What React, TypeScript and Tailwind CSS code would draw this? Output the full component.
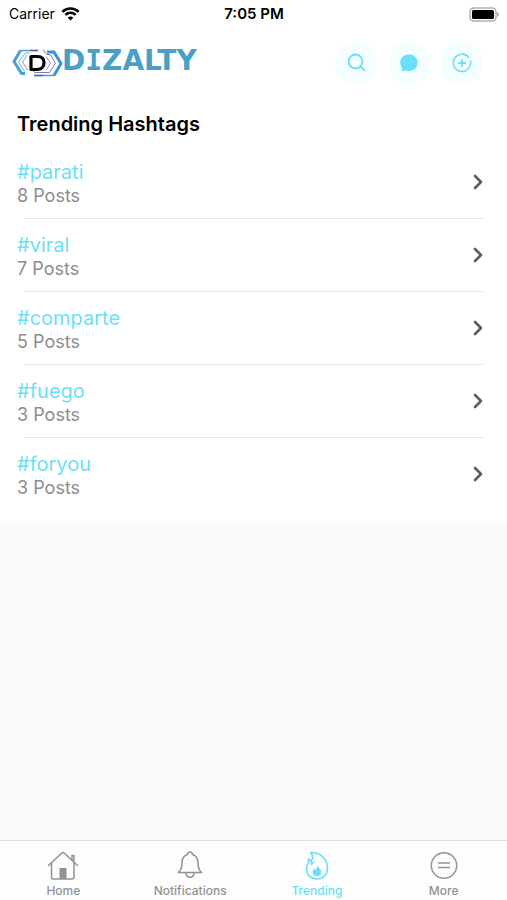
import React from "react";

const hashtags = [
  { tag: "#parati", posts: 8 },
  { tag: "#viral", posts: 7 },
  { tag: "#comparte", posts: 5 },
  { tag: "#fuego", posts: 3 },
  { tag: "#foryou", posts: 3 },
];

function StatusBar() {
  return (
    <div className="grid h-7 grid-cols-3 items-center pr-2 pl-[9px] text-sm text-black">
      <div className="flex items-center gap-1.5">
        <span>Carrier</span>
        <svg width="19" height="14" viewBox="0 0 18 14" fill="none" stroke="#000" strokeWidth="2.6" aria-label="Wi-Fi">
          <path d="M0.9 4.8C5.4 0.3 12.6 0.3 17.1 4.8" />
          <path d="M3.9 7.9C6.8 5.1 11.2 5.1 14.1 7.9" />
          <path d="M9 13.6 6.2 10.7C7.8 9.2 10.2 9.2 11.8 10.7Z" fill="#000" stroke="none" />
        </svg>
      </div>
      <span className="text-center text-[15px] font-semibold">7:05 PM</span>
      <svg className="justify-self-end" width="31" height="15" viewBox="0 0 31 15" aria-label="Battery">
        <rect x="2" y="1" width="26" height="13" rx="3.5" fill="#fff" stroke="#b0b0b0" strokeWidth="1.5" />
        <rect x="4" y="3" width="22" height="9" rx="1.5" fill="#000" />
        <path d="M29.2 5v5c1.1-.4 1.8-1.3 1.8-2.5S30.3 5.4 29.2 5Z" fill="#aaa" />
      </svg>
    </div>
  );
}

function Logo() {
  return (
    <a href="#home" aria-label="Dizalty" className="flex items-center">
      <svg width="51" height="30" viewBox="0 0 51 30" fill="none">
        <path d="M8.500 2.500H26" stroke="#5b9bd0" strokeWidth="1.500" />
        <path d="M8.500 2.500 2 13.500 9.500 25.500H13" stroke="#43a0e4" strokeWidth="3" />
        <path d="M18 5H13.500L6.500 14 12.500 23.500" stroke="#7ba7d4" strokeWidth="1" />
        <path d="M15 7 10.500 14 15.500 22" stroke="#8f9fca" strokeWidth="1" />
        <path d="M22 27.500H42" stroke="#6a8fc0" strokeWidth="1.500" />
        <path d="M35 4H42L49 15.500 42 27.500" stroke="#3e91d7" strokeWidth="3" />
        <path d="M31 1.500 34.500 6.500H38L43.500 15 37.500 24.500H23L20 22" stroke="#7480b8" strokeWidth="1" />
        <path d="M34 8.500 38.500 15 34 22.500" stroke="#9098c6" strokeWidth="1" />
        <path d="M18 2.500h8M22 27.500h9" stroke="#5c6b9f" strokeWidth="1.500" />
        <path d="M19 8.500h6.500c4.500 0 6.500 2.300 6.500 6.200s-2.500 6.800-7 6.800h-6Z" stroke="#050505" strokeWidth="3.200" strokeLinejoin="round" />
      </svg>
      <span className="-ml-px pb-1 font-['DejaVu_Sans',sans-serif] text-[28px] leading-8 font-bold text-[#4a9fc7]">
        D<span className="font-['DejaVu_Sans_Mono',monospace]">I</span>ZALTY
      </span>
    </a>
  );
}

function RoundButton({ label, children }: { label: string; children: React.ReactNode }) {
  return (
    <button aria-label={label} className="flex size-[42px] items-center justify-center rounded-full bg-[#f4fefe] text-[#6bdff8]">
      {children}
    </button>
  );
}

function Header() {
  return (
    <header className="flex h-[70px] items-center justify-between pr-6 pl-3">
      <Logo />
      <div className="flex gap-[11px]">
        <RoundButton label="Search">
          <svg width="20" height="20" viewBox="0 0 20 20" fill="none" stroke="currentColor" strokeWidth="1.8" strokeLinecap="round">
            <circle cx="9.5" cy="8.500" r="7" />
            <path d="m14.700 13.700 3.600 3.600" />
          </svg>
        </RoundButton>
        <RoundButton label="Messages">
          <svg width="20" height="20" viewBox="0 0 20 20" fill="currentColor">
            <path d="M10.300 1.500a8.300 8.300 0 1 1-3.700 15.700c-1.200.8-3 1.100-4.600.8 1-.8 1.400-1.900 1-3.200A8.300 8.300 0 0 1 10.300 1.500Z" />
          </svg>
        </RoundButton>
        <RoundButton label="Add post">
          <svg width="20" height="20" viewBox="0 0 20 20" fill="none" stroke="currentColor" strokeWidth="1.600" strokeLinecap="round">
            <path d="M16.700 4.300A8.700 8.700 0 1 0 18.500 8" />
            <path d="M10 6.800v6.400M6.800 10h6.400" strokeWidth="1.8" />
          </svg>
        </RoundButton>
      </div>
    </header>
  );
}

function HashtagList() {
  return (
    <section className="pb-3">
      <h1 className="px-[17px] pt-2 pb-1 text-xl leading-9 font-semibold text-black">Trending Hashtags</h1>
      <ul>
        {hashtags.map(({ tag, posts }) => (
          <li key={tag} className="group">
            <a href={tag} className="flex h-[72px] items-center justify-between pr-[22px] pl-[17px]">
              <div className="pt-[3px]">
                <div className="text-xl leading-6 text-[#6bdff8]">{tag}</div>
                <div className="text-lg leading-6 text-[#8c8c8c]">{posts} Posts</div>
              </div>
              <svg width="14" height="18" viewBox="0 0 14 18" fill="none" stroke="#5c5c5c" strokeWidth="2.600" strokeLinecap="round" strokeLinejoin="round">
                <path d="m4 3 6 6-6 6" />
              </svg>
            </a>
            <div className="mx-6 h-px bg-[#e4e4e4] group-last:bg-transparent" />
          </li>
        ))}
      </ul>
    </section>
  );
}

function HomeIcon() {
  return (
    <svg width="32" height="30" viewBox="0 0 32 30" fill="none" stroke="currentColor" strokeWidth="1.500" strokeLinecap="round" strokeLinejoin="round">
      <path d="M1.500 14.500 14.600 2.300a2 2 0 0 1 2.800 0l13.100 12.200" />
      <path d="M4.500 12v14a2 2 0 0 0 2 2h18.500a2 2 0 0 0 2-2V12M25 9V4.500h2V11" />
      <path d="M12.500 17h7v11h-7Z" fill="currentColor" stroke="none" />
    </svg>
  );
}

function BellIcon() {
  return (
    <svg width="32" height="30" viewBox="0 0 32 30" fill="none" stroke="currentColor" strokeWidth="1.500" strokeLinecap="round" strokeLinejoin="round">
      <path d="M13.500 3.500c.3-3.200 4.700-3.200 5 0 4 1.300 5.500 4.500 5.500 8.500 0 5 1 7.500 3.700 9.500H4.300C7 19.500 8 17 8 12c0-4 1.500-7.200 5.500-8.500Z" />
      <path d="M12 21.800c.2 6 7.800 6 8 0" />
    </svg>
  );
}

function FlameIcon() {
  return (
    <svg width="32" height="30" viewBox="0 0 32 30" fill="none" stroke="currentColor" strokeWidth="1.600" strokeLinecap="round" strokeLinejoin="round">
      <path d="M9.500 1.500c8.500-.6 17 5.700 17 15.500 0 6.500-4.500 11-10.500 11S5.500 23.800 5.500 18c0-2.500.9-4.700 2.500-7L7.200 8l3 1.700c2.200-1.900 2-5.400-.7-8.200Z" />
      <path d="M9.700 10c.9.800 1 2 .8 3.300l2-2.300" />
      <path d="M16 14.500c1.200 1.900 4.300 3.500 4.300 6.500 0 2.400-2 4-4.400 4s-4.300-1.600-4.300-3.800c0-1.500.7-2.500 1.700-3.500l1.300 1.200c1.200-1.200 1.700-2.600 1.400-4.400Z" fill="currentColor" stroke="none" />
    </svg>
  );
}

function MoreIcon() {
  return (
    <svg width="32" height="30" viewBox="0 0 32 30" fill="none" stroke="currentColor" strokeWidth="1.500" strokeLinecap="round">
      <circle cx="16" cy="14.500" r="12.700" />
      <path d="M10.500 12h11M10.500 16.500h11" />
    </svg>
  );
}

const tabs = [
  { label: "Home", Icon: HomeIcon, active: false },
  { label: "Notifications", Icon: BellIcon, active: false },
  { label: "Trending", Icon: FlameIcon, active: true },
  { label: "More", Icon: MoreIcon, active: false },
];

function TabBar() {
  return (
    <nav className="grid grid-cols-4 border-t border-[#dedede] bg-[#fdfdfd] pt-2.5">
      {tabs.map(({ label, Icon, active }) => (
        <a
          key={label}
          href={"#" + label.toLowerCase()}
          aria-current={active ? "page" : undefined}
          className={
            active
              ? "flex flex-col items-center text-[#6bdff8]"
              : "flex flex-col items-center text-[#929292]"
          }
        >
          <Icon />
          <span className="pt-px text-xs leading-[18px] font-medium">{label}</span>
        </a>
      ))}
    </nav>
  );
}

export default function App() {
  return (
    <div className="flex min-h-screen flex-col bg-[#fafafa] font-[Inter,sans-serif]">
      <main className="flex-1">
        <div className="bg-white">
          <StatusBar />
          <Header />
          <HashtagList />
        </div>
      </main>
      <TabBar />
    </div>
  );
}
